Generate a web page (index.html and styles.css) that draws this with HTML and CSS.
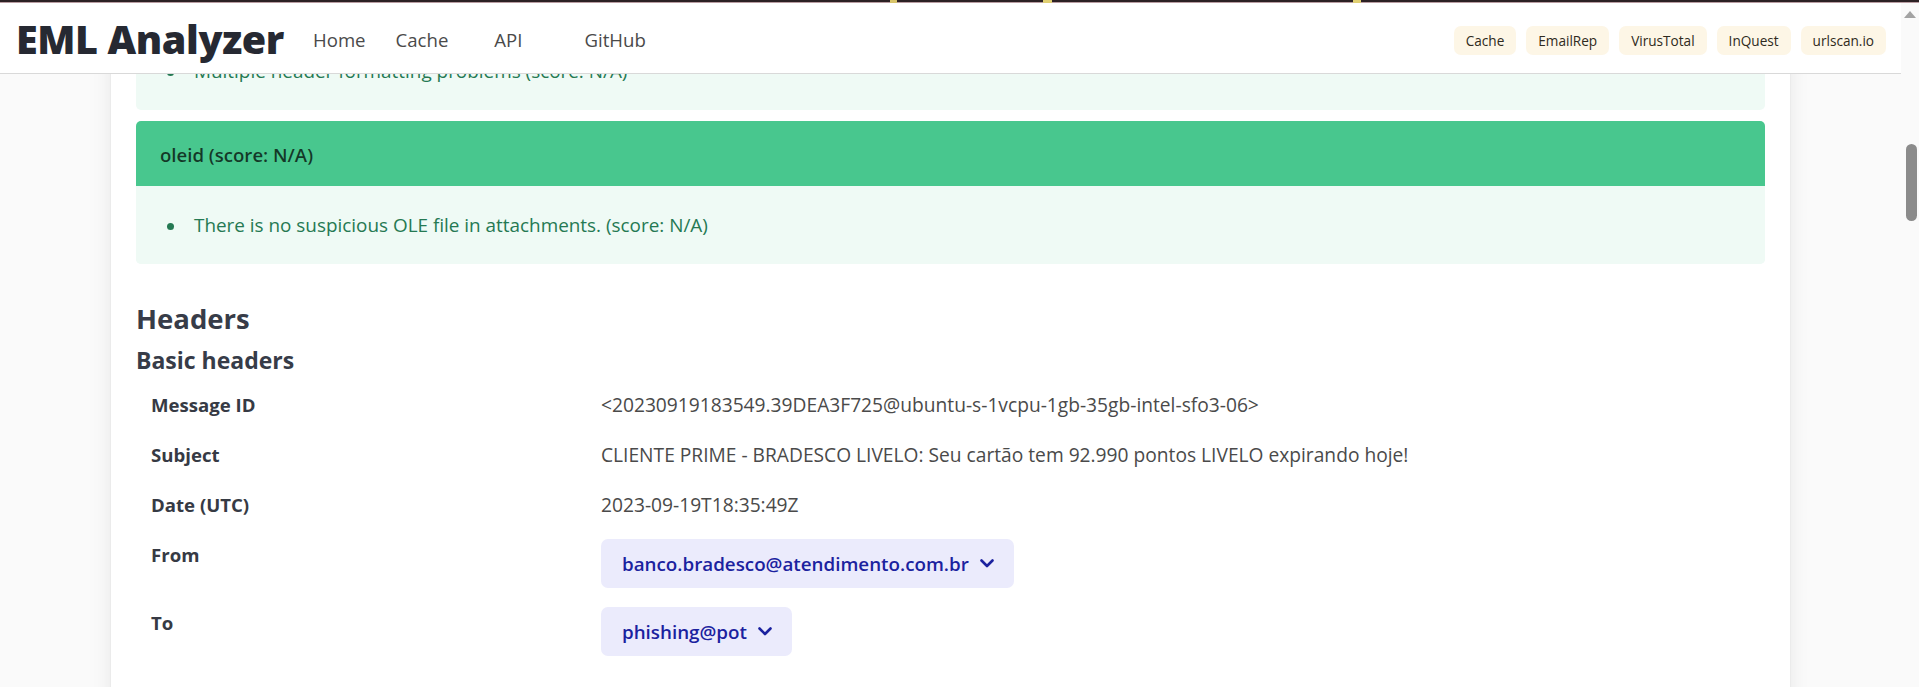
FILE: index.html
```html
<!DOCTYPE html>
<html lang="en">
<head>
<meta charset="utf-8">
<title>EML Analyzer</title>
<link rel="stylesheet" href="styles.css">
</head>
<body>
<div class="window-strip"></div>
<div class="window">
  <div class="page">
    <nav class="navbar">
      <div class="navbar-brand"><a class="brand">EML Analyzer</a></div>
      <div class="navbar-start">
        <a class="nav-link">Home</a>
        <a class="nav-link">Cache</a>
        <a class="nav-link nav-link--api">API</a>
        <a class="nav-link nav-link--github">GitHub</a>
      </div>
      <div class="navbar-end">
        <span class="tag">Cache</span>
        <span class="tag">EmailRep</span>
        <span class="tag">VirusTotal</span>
        <span class="tag">InQuest</span>
        <span class="tag">urlscan.io</span>
      </div>
    </nav>
    <main class="section">
      <div class="box">
        <article class="message message--cut">
          <div class="message-body">
            <ul class="bullets"><li>Multiple header formatting problems (score: N/A)</li></ul>
          </div>
        </article>
        <article class="message">
          <div class="message-header">oleid (score: N/A)</div>
          <div class="message-body">
            <ul class="bullets"><li>There is no suspicious OLE file in attachments. (score: N/A)</li></ul>
          </div>
        </article>
        <h2 class="title">Headers</h2>
        <h3 class="subtitle">Basic headers</h3>
        <table class="table">
          <tbody>
            <tr><th>Message ID</th><td>&lt;20230919183549.39DEA3F725@ubuntu-s-1vcpu-1gb-35gb-intel-sfo3-06&gt;</td></tr>
            <tr><th>Subject</th><td>CLIENTE PRIME - BRADESCO LIVELO: Seu cartão tem 92.990 pontos LIVELO expirando hoje!</td></tr>
            <tr><th>Date (UTC)</th><td>2023-09-19T18:35:49Z</td></tr>
            <tr><th>From</th><td><button class="dropdown-btn">banco.bradesco@atendimento.com.br<svg class="chevron" viewBox="0 0 14 9" width="14" height="9"><path d="M1.5 1.5 L7 7 L12.5 1.5"/></svg></button></td></tr>
            <tr><th>To</th><td><button class="dropdown-btn">phishing@pot<svg class="chevron" viewBox="0 0 14 9" width="14" height="9"><path d="M1.5 1.5 L7 7 L12.5 1.5"/></svg></button></td></tr>
          </tbody>
        </table>
      </div>
    </main>
  </div>
  <div class="scrollbar">
    <span class="scroll-arrow"></span>
    <span class="scroll-thumb"></span>
  </div>
</div>
</body>
</html>
```

FILE: styles.css
```css
* { box-sizing: border-box; }

html, body {
  margin: 0;
  height: 687px;
  overflow: hidden;
}

body {
  font-family: "Open Sans", "Noto Sans", sans-serif;
  font-size: 19.2px;
  color: #4a4a4a;
  background: #fafafa;
  display: flex;
  flex-direction: column;
}

.window-strip {
  height: 3px;
  flex: none;
  background:
    linear-gradient(to right, transparent 890px, #d8c46a 890px, #d8c46a 897px, transparent 897px, transparent 1043px, #e0cf72 1043px, #e0cf72 1052px, transparent 1052px, transparent 1353px, #e0cf72 1353px, #e0cf72 1361px, transparent 1361px),
    linear-gradient(to bottom, #2c2124 0, #2c2124 2px, #b99da2 2px);
}

.window {
  flex: 1;
  display: flex;
  min-height: 0;
}

.page {
  flex: 1;
  position: relative;
  overflow: hidden;
  background: #fafafa;
}

/* Navbar (fixed-top, overlays scrolled content) */
.navbar {
  position: absolute;
  top: 0;
  left: 0;
  right: 0;
  z-index: 10;
  height: 71px;
  background: #fff;
  border-bottom: 1px solid #d9d9d9;
  display: flex;
  align-items: center;
}

.navbar-brand {
  width: 296px;
  padding-left: 16px;
  flex: none;
}

.brand {
  font-size: 39.5px;
  font-weight: 800;
  color: #262932;
  letter-spacing: -0.4px;
  line-height: 1;
  position: relative;
  top: 2px;
}

.navbar-start {
  display: flex;
  align-items: center;
  padding-left: 2px;
}

.nav-link {
  padding: 0 15px;
  color: #4a4a4a;
  font-size: 18.6px;
  line-height: 28px;
  position: relative;
  top: 2px;
}

.nav-link--api { margin-left: 16px; }
.nav-link--github { margin-left: 32px; }

.navbar-end {
  margin-left: auto;
  padding-right: 15px;
  display: flex;
  gap: 10px;
  align-items: center;
  position: relative;
  top: 2px;
}

.tag {
  height: 29px;
  padding: 0 12px;
  display: inline-flex;
  align-items: center;
  background: #fdf6e6;
  color: #2f2a20;
  border-radius: 7px;
  font-size: 13.6px;
}

/* Main content */
.section {
  padding-top: 4px;
}

.box {
  width: 1679px;
  margin: 0 auto;
  background: #fff;
  padding: 25px 25px 40px;
  box-shadow: 0 10px 20px -2px rgba(10, 10, 10, 0.1), 0 0 0 1px rgba(10, 10, 10, 0.02);
  min-height: 800px;
}

.message {
  margin: 0 0 11px;
  border-radius: 5px;
  overflow: hidden;
  background: #effaf5;
}

.message-header {
  background: #48c78e;
  color: rgba(0, 0, 0, 0.72);
  font-size: 18.6px;
  font-weight: 600;
  line-height: 25px;
  padding: 21px 24px 19px;
}

.message-body {
  background: #effaf5;
  color: #257953;
  font-size: 18.9px;
  padding: 24px 30px;
  line-height: 30px;
}

.bullets {
  list-style: none;
  margin: 0;
  padding: 0;
}

.bullets li {
  display: flex;
  align-items: center;
}

.bullets li::before {
  content: "";
  width: 7px;
  height: 7px;
  border-radius: 50%;
  background: #257953;
  margin: 0 20px 0 1px;
  flex: none;
  position: relative;
  top: 1px;
}

.title {
  margin: 38px 0 0;
  font-size: 27.5px;
  line-height: 34px;
  font-weight: 700;
  color: #373c48;
}

.subtitle {
  margin: 10px 0 0;
  font-size: 23px;
  line-height: 29px;
  font-weight: 700;
  color: #373c48;
}

.table {
  margin-top: 5px;
  width: 100%;
  border-collapse: collapse;
}

.table th,
.table td {
  padding: 10px 15px;
  line-height: 30px;
  vertical-align: top;
  text-align: left;
}

.table th {
  width: 450px;
  font-size: 18.6px;
  font-weight: 700;
  color: #363a44;
}

.table td {
  color: #4a4a4a;
}

.dropdown-btn {
  display: inline-flex;
  align-items: center;
  gap: 11px;
  height: 49px;
  padding: 0 20px 0 21px;
  margin-top: -1px;
  border: 0;
  border-radius: 7px;
  background: #ebebfc;
  color: #1b229f;
  font-family: inherit;
  font-size: 18.8px;
  font-weight: 600;
}

.chevron {
  fill: none;
  stroke: #1b229f;
  stroke-width: 2.6;
  stroke-linecap: round;
  stroke-linejoin: round;
}

/* Scrollbar column */
.scrollbar {
  width: 18px;
  flex: none;
  background: #fafafa;
  display: flex;
  flex-direction: column;
  align-items: center;
  padding-top: 8px;
}

.scroll-arrow {
  width: 0;
  height: 0;
  border-left: 6px solid transparent;
  border-right: 6px solid transparent;
  border-bottom: 7px solid #a3a3a3;
}

.scroll-thumb {
  width: 11px;
  height: 77px;
  margin-top: 126px;
  margin-left: 2px;
  border-radius: 6px;
  background: #8b8b8b;
}
```
